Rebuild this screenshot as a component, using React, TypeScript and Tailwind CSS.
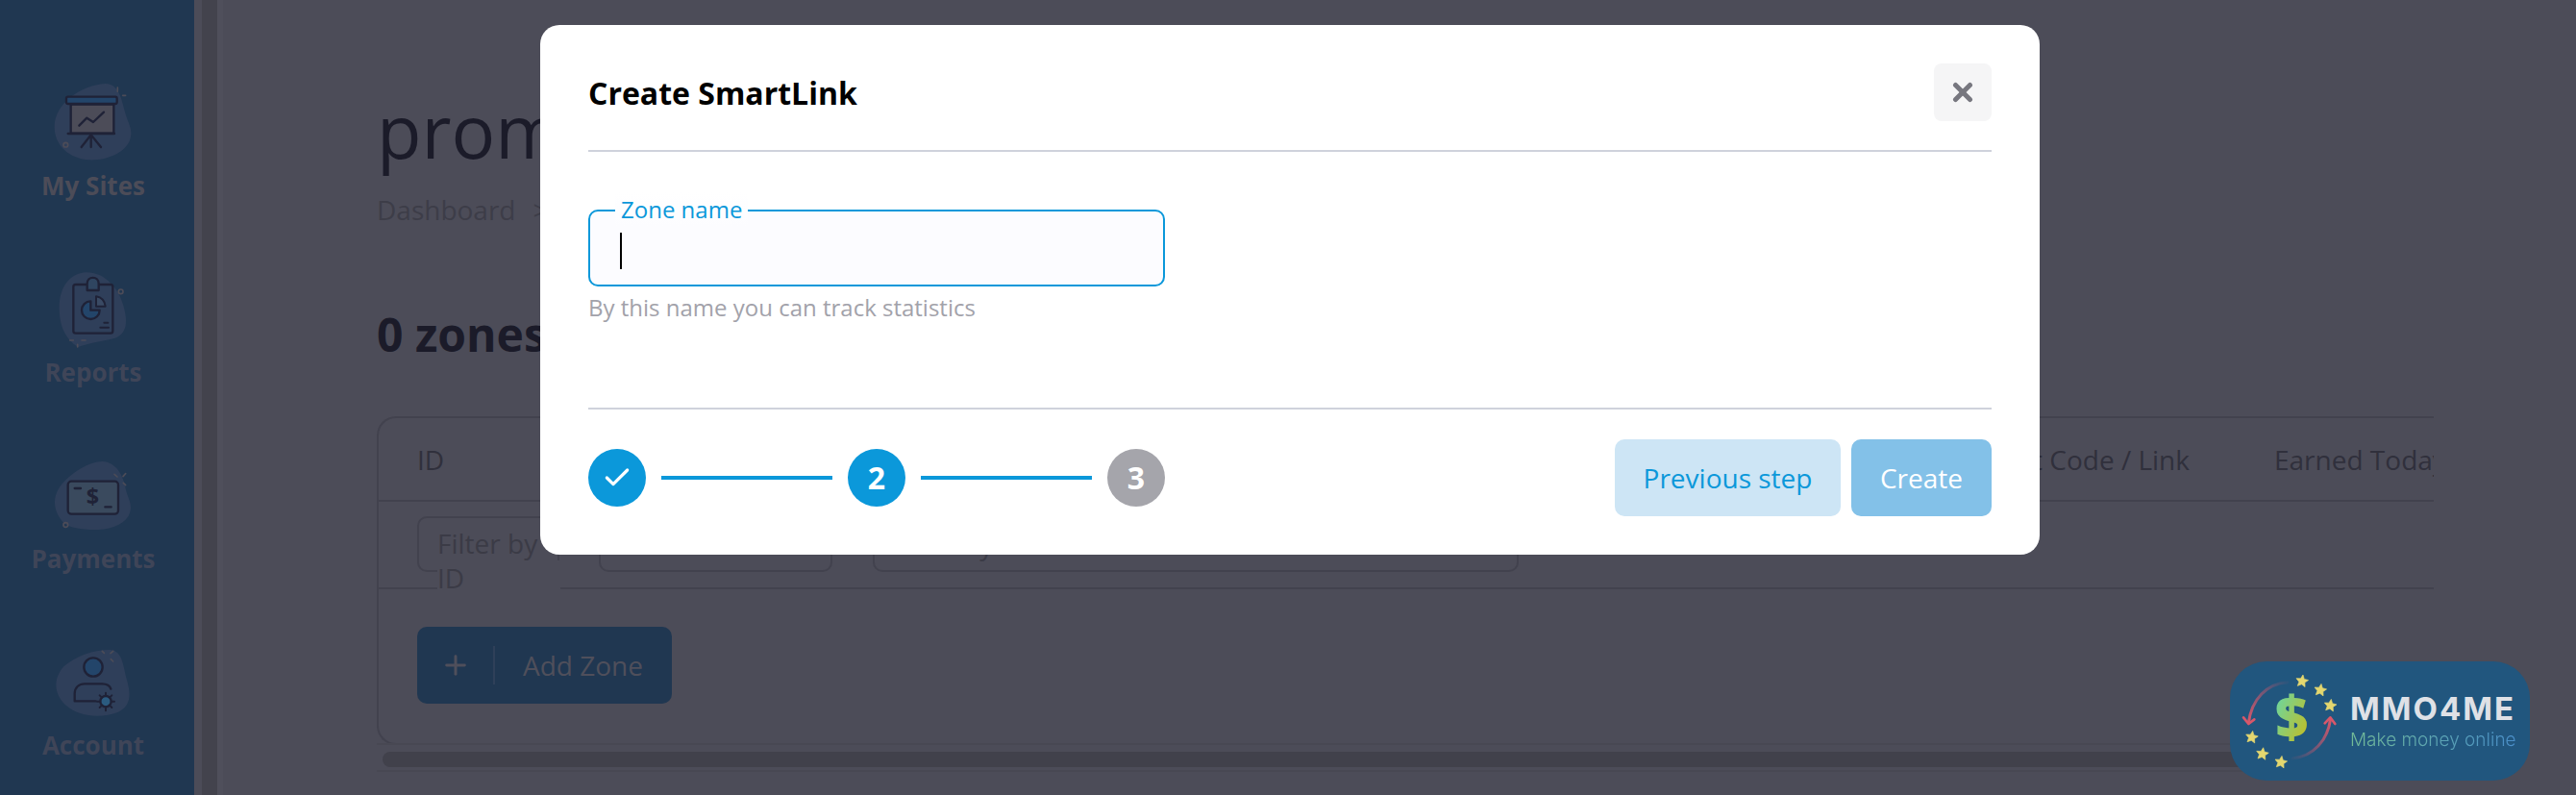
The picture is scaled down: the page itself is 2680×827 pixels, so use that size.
import { Check, Plus, X } from 'lucide-react';

const ink = '#1f2237';

function Star({ x, y, r = 20 }: { x: number; y: number; r?: number }) {
  const pts = Array.from({ length: 10 }, (_, i) => {
    const a = (Math.PI / 5) * i - Math.PI / 2 + 0.15;
    const d = i % 2 === 0 ? r : r * 0.48;
    return `${x + d * Math.cos(a)},${y + d * Math.sin(a)}`;
  }).join(' ');
  return <polygon points={pts} fill="#e4d76f" stroke="#e4d76f" strokeWidth="2" strokeLinejoin="round" />;
}

function SitesIcon() {
  return (
    <svg viewBox="157 73 270 270" className="w-[90px] h-[90px]" fill="none" stroke={ink} strokeWidth="7" strokeLinecap="round" strokeLinejoin="round">
      <path d="M330 85C370 85 380 130 390 170C400 210 420 230 405 265C385 305 330 325 280 323C220 320 171 280 171 220C171 150 250 90 330 85Z" fill="#2f3f5a" stroke="none" />
      <rect x="222" y="150" width="134" height="90" fill="#4c4c58" />
      <rect x="208" y="126" width="158" height="22" rx="5" fill="#23456a" />
      <path d="M213 241H358M285 241V283M285 245L255 283M285 245L316 283" />
      <path d="M248 216L272 192L292 205L325 174" />
      <path d="M368 97V110M384 122H393" stroke="#4c4c58" strokeWidth="5" />
      <circle cx="206" cy="276" r="7" stroke="#4c4c58" strokeWidth="5" />
    </svg>
  );
}

function ReportsIcon() {
  return (
    <svg viewBox="157 651 270 270" className="w-[90px] h-[90px]" fill="none" stroke={ink} strokeWidth="7" strokeLinecap="round" strokeLinejoin="round">
      <path d="M270 670C330 670 370 720 385 770C400 820 400 860 360 875C320 885 280 890 245 903C215 885 186 850 186 780C186 715 220 672 270 670Z" fill="#2f3f5a" stroke="none" />
      <rect x="230" y="708" width="123" height="152" rx="7" fill="#2f3f5a" />
      <path d="M273 726V706C273 680 309 680 309 706V726Z" fill="#2f4560" />
      <path d="M284 760A28 28 0 1 0 312 788H284Z" fill="#23456a" />
      <path d="M301 745C318 748 328 760 330 776H301Z" fill="#3a4a64" strokeWidth="6" />
      <path d="M326 827H338M314 842H340" strokeWidth="6" />
      <circle cx="378" cy="730" r="7" stroke="#4c4c58" strokeWidth="5" />
      <path d="M219 882H230M256 882H268M243 895V903" stroke="#4c4c58" strokeWidth="5" />
    </svg>
  );
}

function PaymentsIcon() {
  return (
    <svg viewBox="157 63 270 270" className="w-[90px] h-[90px]" fill="none" stroke={ink} strokeWidth="7" strokeLinecap="round" strokeLinejoin="round">
      <path d="M320 90C365 92 385 135 392 170C398 205 420 225 402 260C380 295 330 305 280 303C240 300 205 295 190 270C165 235 165 195 195 160C225 125 280 90 320 90Z" fill="#2f3f5a" stroke="none" />
      <rect x="213" y="152" width="157" height="102" rx="11" fill="#3a4a5e" />
      <path d="M234 174H253M329 232H348" />
      <text x="290" y="226" textAnchor="middle" fontSize="70" fontWeight="700" fontFamily="'Open Sans', sans-serif" fill={ink} stroke="none">$</text>
      <path d="M358 130L367 138M393 128L385 137M386 157L393 164" stroke="#4c4c58" strokeWidth="5" />
      <circle cx="206" cy="288" r="7" stroke="#4c4c58" strokeWidth="5" />
    </svg>
  );
}

function AccountIcon() {
  return (
    <svg viewBox="157 645 270 270" className="w-[90px] h-[90px]" fill="none" stroke={ink} strokeWidth="7" strokeLinecap="round" strokeLinejoin="round">
      <path d="M345 678C380 680 385 720 395 765C408 810 415 850 370 872C320 892 250 890 205 850C170 815 165 770 200 730C240 695 300 676 345 678Z" fill="#2f3f5a" stroke="none" />
      <circle cx="292" cy="732" r="29" fill="#23456a" />
      <path d="M300 838H234V815C234 795 248 784 265 784H320C336 784 344 790 347 800" />
      <circle cx="331" cy="839" r="17" fill="#2b5b80" />
      <path d="M331 812V822M331 856V868M304 839H314M348 839H358M312 820L319 827M343 851L350 858M350 820L343 827M319 851L312 858" strokeWidth="6" />
      <path d="M320 682L326 688M354 682L346 689M347 707L354 714" stroke="#4c4c58" strokeWidth="5" />
    </svg>
  );
}

function NavItem({ label, icon, active }: { label: string; icon: React.ReactNode; active?: boolean }) {
  return (
    <div className="h-[194px] flex flex-col items-center">
      {icon}
      <span className={`text-[26px] leading-[40px] font-bold ${active ? 'text-[#4c4c58]' : 'text-[#3f4558]'}`}>{label}</span>
    </div>
  );
}

function Logo() {
  return (
    <div className="absolute left-[2320px] top-[688px] w-[312px] h-[124px] rounded-[38px] bg-[#21567e] flex items-center">
      <svg viewBox="60 53 375 372" className="w-[125px] h-[124px] shrink-0" fill="none">
        <defs>
          <linearGradient id="dollar" x1="0" y1="0" x2="1" y2="1">
            <stop offset="0.1" stopColor="#66d8a8" />
            <stop offset="0.9" stopColor="#c4bc22" />
          </linearGradient>
          <linearGradient id="arcLeft" x1="1" y1="0" x2="0" y2="1">
            <stop offset="0" stopColor="#d8576a" stopOpacity="0.05" />
            <stop offset="1" stopColor="#d8576a" />
          </linearGradient>
          <linearGradient id="arcRight" x1="0" y1="1" x2="1" y2="0">
            <stop offset="0" stopColor="#d8576a" stopOpacity="0.05" />
            <stop offset="1" stopColor="#d8576a" />
          </linearGradient>
        </defs>
        <path d="M240 118C175 122 128 170 118 245" stroke="url(#arcLeft)" strokeWidth="9" strokeLinecap="round" />
        <path d="M102 228L118 248L136 234" stroke="#d8576a" strokeWidth="8" strokeLinecap="round" strokeLinejoin="round" />
        <path d="M255 356C320 350 365 300 374 232" stroke="url(#arcRight)" strokeWidth="9" strokeLinecap="round" />
        <path d="M356 246L373 228L388 248" stroke="#d8576a" strokeWidth="8" strokeLinecap="round" strokeLinejoin="round" />
        <Star x={285} y={115} />
        <Star x={342} y={143} />
        <Star x={373} y={191} />
        <Star x={128} y={290} />
        <Star x={161} y={342} />
        <Star x={219} y={368} />
        <text x="252" y="290" textAnchor="middle" fontSize="178" fontWeight="800" fontFamily="'Open Sans', sans-serif" fill="url(#dollar)">$</text>
      </svg>
      <div className="flex flex-col font-['Inter',sans-serif]">
        <span className="text-[33px] leading-[38px] font-bold text-[#dfe1e6] tracking-[2px]">MMO4ME</span>
        <span className="mt-[2px] text-[19px] leading-[24px] font-light text-transparent bg-clip-text bg-gradient-to-r from-[#74bb96] to-[#4a8ec9]">Make money online</span>
      </div>
    </div>
  );
}

function Modal() {
  return (
    <div className="absolute left-[562px] top-[26px] w-[1560px] h-[551px] rounded-[20px] bg-white px-[50px]">
      <div className="pt-[40px] pb-[30px] border-b-2 border-[#cfd2dc] flex items-center justify-between">
        <h2 className="pt-[2px] text-[32px] font-bold text-black leading-[44px]">Create SmartLink</h2>
        <button className="w-[60px] h-[60px] rounded-[8px] bg-[#f5f5f6] flex items-center justify-center">
          <X className="w-[30px] h-[30px] text-[#77777f]" strokeWidth={4} />
        </button>
      </div>

      <div className="pt-[60px] h-[268px] border-b-2 border-[#cfd2dc]">
        <div className="relative w-[600px] h-[80px] rounded-[10px] border-2 border-[#0b98da] bg-[#fcfcff] pl-[31px] pt-[22px]">
          <label className="absolute left-[26px] top-[-20px] px-[6px] h-[36px] bg-gradient-to-b from-white to-[#fcfcff] text-[24px] leading-[36px] text-[#0b98da]">Zone name</label>
          <div className="w-[2px] h-[38px] bg-black" />
        </div>
        <p className="mt-[5px] text-[24px] leading-[33px] text-[#a2a2aa]">By this name you can track statistics</p>
      </div>

      <div className="pt-[31px] flex items-center justify-between">
        <div className="flex items-center w-[600px]">
          <div className="w-[60px] h-[60px] rounded-full bg-[#0b98da] flex items-center justify-center shrink-0">
            <Check className="w-[32px] h-[32px] text-white" strokeWidth={2.4} />
          </div>
          <div className="h-[4px] flex-1 mx-[16px] bg-[#0b98da]" />
          <div className="w-[60px] h-[60px] rounded-full bg-[#0b98da] flex items-center justify-center shrink-0 text-[32px] font-bold text-white">2</div>
          <div className="h-[4px] flex-1 mx-[16px] bg-[#0b98da]" />
          <div className="w-[60px] h-[60px] rounded-full bg-[#a5a5ab] flex items-center justify-center shrink-0 text-[32px] font-bold text-white">3</div>
        </div>
        <div className="flex gap-[11px]">
          <button className="w-[235px] h-[80px] rounded-[10px] bg-[#cde5f5] text-[28px] text-[#0b98da]">Previous step</button>
          <button className="w-[146px] h-[80px] rounded-[10px] bg-[#83c1e8] text-[28px] text-white">Create</button>
        </div>
      </div>
    </div>
  );
}

export default function App() {
  return (
    <div className="relative h-[827px] w-[2680px] overflow-hidden bg-[#4c4c58] flex font-['Open_Sans',sans-serif]">
      {/* Sidebar */}
      <aside className="w-[202px] shrink-0 bg-[#203751] pt-[83px] pr-[8px]">
        <NavItem label="My Sites" icon={<SitesIcon />} active />
        <NavItem label="Reports" icon={<ReportsIcon />} />
        <NavItem label="Payments" icon={<PaymentsIcon />} />
        <NavItem label="Account" icon={<AccountIcon />} />
      </aside>
      <div className="w-[8px] shrink-0 bg-[#4c4c58]" />
      <div className="w-[16px] shrink-0 bg-[#43434d]" />
      <div className="w-[6px] shrink-0 bg-[#4f4f5b]" />

      {/* Page behind the dialog */}
      <main className="flex-1 min-w-0 pl-[160px] pr-[148px]">
        <h1 className="mt-[86px] text-[76px] leading-[100px] text-[#1b1b29] whitespace-nowrap">prom</h1>
        <div className="mt-[12px] text-[28px] leading-[40px] text-[#3d3d48] whitespace-nowrap">Dashboard<span className="ml-[18px]">&gt;</span></div>
        <div className="mt-[78px] text-[48px] leading-[64px] font-bold text-[#1b1b29]">0 zones</div>

        <div className="mt-[53px] h-[342px] rounded-l-[20px] border-2 border-r-0 border-[#42424e] overflow-hidden">
          <div className="h-[87px] border-b-2 border-[#42424e] flex items-center whitespace-nowrap text-[28px] text-[#30303c]">
            <span className="pl-[40px]">ID</span>
            <span className="ml-auto">Direct Code / Link</span>
            <span className="ml-[88px] mr-[-8px] w-[174px] shrink-0">Earned Today</span>
          </div>
          <div className="h-[91px] border-b-2 border-[#42424e] pt-[15px] pl-[40px] flex items-start text-[28px] text-[#3b3b46]">
            <div className="w-[148px] h-[58px] shrink-0 rounded-[10px] border-2 border-[#42424e] pl-[19px] leading-[36px]">
              <div className="pt-[8px] whitespace-nowrap">Filter by</div>
              <div className="relative z-10 w-[128px] bg-[#4c4c58]">ID</div>
            </div>
            <div className="ml-[41px] w-[243px] h-[58px] shrink-0 rounded-[10px] border-2 border-[#42424e] flex items-center justify-end pr-[22px]">
              <span className="mt-[8px] w-0 h-0 border-x-[7px] border-x-transparent border-t-[8px] border-t-[#3b3b46]" />
            </div>
            <div className="ml-[42px] w-[672px] h-[58px] shrink-0 rounded-[10px] border-2 border-[#42424e] pl-[19px] leading-[54px] whitespace-nowrap">Filter by name</div>
          </div>
          <div className="pt-[39px] pl-[40px]">
            <button className="w-[265px] h-[80px] rounded-[10px] bg-[#203751] flex items-center text-[28px] text-[#4f4f5b]">
              <Plus className="ml-[24px] w-[32px] h-[32px]" strokeWidth={2.2} />
              <span className="ml-[23px] w-[2px] h-[40px] bg-[#2f4059]" />
              <span className="ml-[29px]">Add Zone</span>
            </button>
          </div>
        </div>

        <div className="h-[30px] border-y-2 border-[#484853] pl-[6px] py-[7px] -mt-[2px]">
          <div className="w-[2011px] h-[16px] rounded-full bg-[#41414b]" />
        </div>
      </main>

      <Modal />
      <Logo />
    </div>
  );
}
